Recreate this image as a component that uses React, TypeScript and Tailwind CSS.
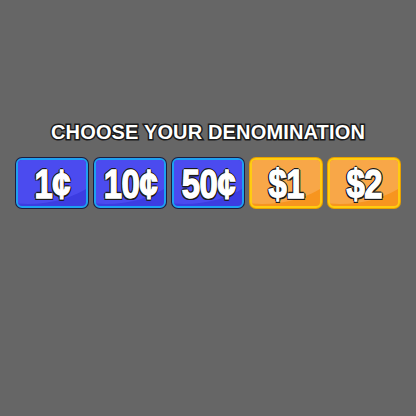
import React from "react";

const items = [
  { label: "1¢", kind: "blue" },
  { label: "10¢", kind: "blue" },
  { label: "50¢", kind: "blue" },
  { label: "$1", kind: "orange" },
  { label: "$2", kind: "orange" },
];

function Btn({ label, kind }: { label: string; kind: string }) {
  const blue = kind === "blue";
  return (
    <div
      className={
        blue
          ? "w-[74px] h-[52px] rounded-[7px] bg-[#1c1c40] p-px"
          : "w-[74px] h-[52px] rounded-[7px] bg-[#e8a000] p-px"
      }
    >
      <div
        className={
          blue
            ? "relative w-full h-full rounded-[6px] border-2 border-[#1ea0f0] bg-[#3c3ce2] overflow-hidden flex items-center justify-center"
            : "relative w-full h-full rounded-[6px] border-2 border-[#ffcc10] bg-[#f7951f] overflow-hidden flex items-center justify-center"
        }
      >
        <div
          className={
            blue
              ? "absolute left-[-80px] top-[-84px] w-[180px] h-[128px] rounded-[50%] bg-[#4b4bef]"
              : "absolute left-[-80px] top-[-84px] w-[180px] h-[128px] rounded-[50%] bg-[#f8a748]"
          }
        />
        <span className="relative inline-block scale-x-[0.8] text-white font-bold text-[41px] leading-none tracking-[-0.5px] [font-family:'Liberation_Sans',Arial,sans-serif] [-webkit-text-stroke:1.4px_#ffffff] [text-shadow:2px_0_0_#1a1a1a,-2px_0_0_#1a1a1a,0_2px_0_#1a1a1a,0_-2px_0_#1a1a1a,1.5px_1.5px_0_#1a1a1a,-1.5px_1.5px_0_#1a1a1a,1.5px_-1.5px_0_#1a1a1a,-1.5px_-1.5px_0_#1a1a1a] mt-[2px]">
          {label}
        </span>
      </div>
    </div>
  );
}

export default function App() {
  return (
    <div className="w-[416px] h-[416px] bg-[#666666] flex flex-col items-center pt-[121px]">
      <div className="text-white font-bold text-[20px] leading-[22px] tracking-[0.15px] [font-family:'Liberation_Sans',Arial,sans-serif] [-webkit-text-stroke:3px_#1a1a1a] [paint-order:stroke_fill]">
        CHOOSE YOUR DENOMINATION
      </div>
      <div className="flex gap-1 mt-[14px]">
        {items.map((it) => (
          <Btn key={it.label} label={it.label} kind={it.kind} />
        ))}
      </div>
    </div>
  );
}
